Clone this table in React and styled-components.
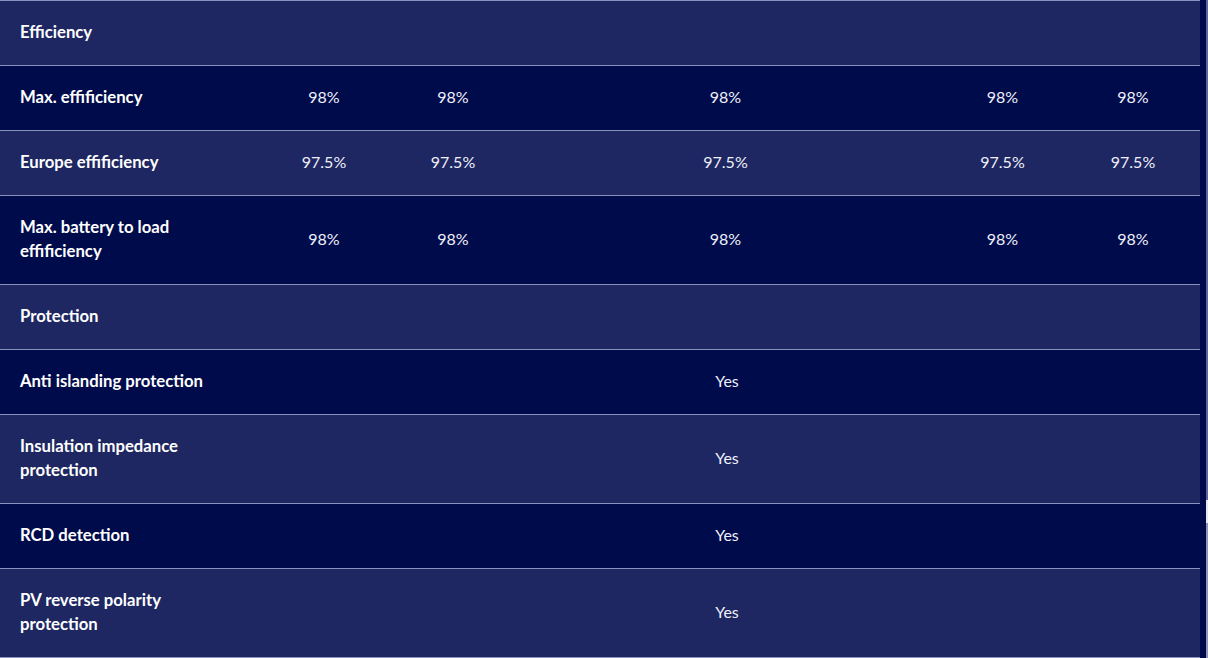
import React from "react";
import styled, { createGlobalStyle } from "styled-components";

const Global = createGlobalStyle`
  html, body { margin: 0; padding: 0; background: #000a4a; }
  body { font-family: Lato, "Open Sans", sans-serif; overflow: hidden; }
`;

const Page = styled.div`
  display: flex;
  width: 1208px;
  height: 658px;
  background: #000a4a;
`;

const Table = styled.div`
  width: 1200px;
  display: grid;
  grid-template-columns: 254px 140px 118px 427px 127px 134px;
  border-top: 1px solid #8a93bf;
  align-content: start;
`;

const Row = styled.div`
  display: contents;
  & > * {
    background: ${(p) => (p.$light ? "#1e2761" : "#000b4b")};
    border-bottom: 1px solid #8a93bf;
  }
`;

const Label = styled.div`
  padding: 19px 20px 21px;
  color: #ffffff;
  font-weight: 700;
  font-size: 16.7px;
  line-height: 24px;
  display: flex;
  align-items: center;
  grid-column: ${(p) => (p.$full ? "1 / -1" : "auto")};
  & > span { max-width: 200px; }
`;

const Value = styled.div`
  color: #eef0fa;
  font-size: 16px;
  line-height: 24px;
  padding-bottom: 2px;
  display: flex;
  align-items: center;
  justify-content: center;
  grid-column: ${(p) => (p.$span ? "2 / -1" : "auto")};
`;

const Gutter = styled.div`
  width: 6px;
  background: #000a4a;
`;

const Track = styled.div`
  width: 2px;
  display: flex;
  flex-direction: column;
`;

const TrackPart = styled.div`
  height: ${(p) => p.$h}px;
  flex: ${(p) => (p.$grow ? 1 : "none")};
  background: ${(p) => p.$c};
`;

const rows = [
  { type: "head", label: "Efficiency" },
  { label: "Max. effificiency", vals: ["98%", "98%", "98%", "98%", "98%"] },
  { label: "Europe effificiency", vals: ["97.5%", "97.5%", "97.5%", "97.5%", "97.5%"] },
  { label: "Max. battery to load effificiency", vals: ["98%", "98%", "98%", "98%", "98%"] },
  { type: "head", label: "Protection" },
  { label: "Anti islanding protection", span: "Yes" },
  { label: "Insulation impedance protection", span: "Yes" },
  { label: "RCD detection", span: "Yes" },
  { label: "PV reverse polarity protection", span: "Yes" },
];

export default function App() {
  return (
    <>
      <Global />
      <Page>
        <Table>
          {rows.map((r, i) => (
            <Row key={i} $light={i % 2 === 0}>
              {r.type === "head" ? (
                <Label $full>
                  <span>{r.label}</span>
                </Label>
              ) : (
                <>
                  <Label>
                    <span>{r.label}</span>
                  </Label>
                  {r.span ? (
                    <Value $span>{r.span}</Value>
                  ) : (
                    r.vals.map((v, j) => <Value key={j}>{v}</Value>)
                  )}
                </>
              )}
            </Row>
          ))}
        </Table>
        <Gutter />
        <Track>
          <TrackPart $h={500} $c="#5f6598" />
          <TrackPart $h={23} $c="#e8e9f0" />
          <TrackPart $grow $c="#9094b4" />
        </Track>
      </Page>
    </>
  );
}
